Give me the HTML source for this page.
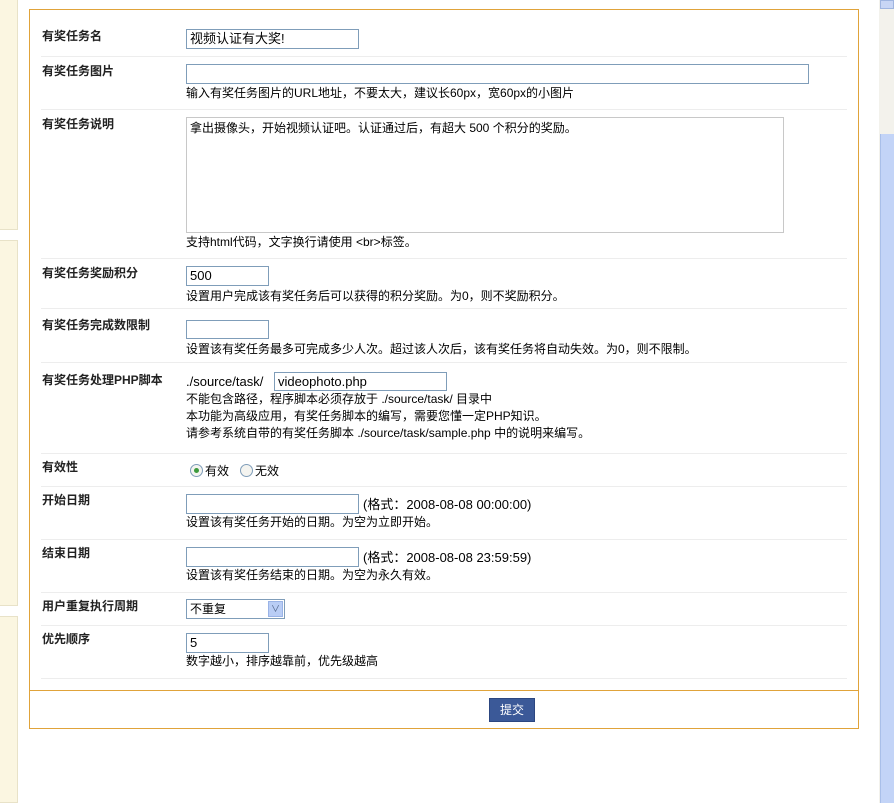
<!DOCTYPE html>
<html><head><meta charset="utf-8"><style>
*{margin:0;padding:0;box-sizing:border-box}
body{width:894px;height:803px;background:#fff;position:relative;overflow:hidden;font-family:"Liberation Sans","Noto Sans CJK SC",sans-serif;font-size:12px;color:#000}
.a{position:absolute;white-space:nowrap;line-height:14px}
.l{font-weight:bold;left:42px;color:#222}
.i{position:absolute;border:1px solid #7f9db9;background:#fff;font-size:13px;line-height:17px;padding-left:3px}
.hr{position:absolute;left:41px;width:806px;height:1px;background:#ededed}
.side{position:absolute;left:0;width:18px;background:#fbf6e1;border-right:1px solid #e8e2c8;border-bottom:1px solid #e8e2c8}
</style></head><body>
<div class="side" style="top:0;height:230px"></div>
<div class="side" style="top:240px;height:366px;border-top:1px solid #e8e2c8"></div>
<div class="side" style="top:616px;height:187px;border-top:1px solid #e8e2c8"></div>
<div style="position:absolute;left:29px;top:9px;width:830px;height:720px;border:1px solid #e0a33a"></div>
<div style="position:absolute;left:30px;top:690px;width:828px;height:1px;background:#e0a33a"></div>
<div style="position:absolute;left:879px;top:0;width:15px;height:803px;background:#f3f2ec"></div>
<div style="position:absolute;left:880px;top:0;width:14px;height:9px;background:#c8d6f5;border:1px solid #9fb5e0"></div>
<div style="position:absolute;left:880px;top:134px;width:14px;height:669px;background:#c3d4f7;border-left:1px solid #a9bfe9"></div>

<div class="hr" style="top:56px"></div><div class="hr" style="top:109px"></div><div class="hr" style="top:258px"></div><div class="hr" style="top:308px"></div><div class="hr" style="top:362px"></div><div class="hr" style="top:453px"></div><div class="hr" style="top:486px"></div><div class="hr" style="top:539px"></div><div class="hr" style="top:592px"></div><div class="hr" style="top:625px"></div><div class="hr" style="top:678px"></div>

<div class="a l" style="top:29px">有奖任务名</div>
<div class="i" style="left:186px;top:29px;width:173px;height:20px">视频认证有大奖!</div>

<div class="a l" style="top:64px">有奖任务图片</div>
<div class="i" style="left:186px;top:64px;width:623px;height:20px"></div>
<div class="a" style="left:186px;top:86px">输入有奖任务图片的URL地址，不要太大，建议长60px，宽60px的小图片</div>

<div class="a l" style="top:117px">有奖任务说明</div>
<div class="i" style="left:186px;top:117px;width:598px;height:116px;border-color:#c8c8c8;font-size:12px;padding:2px 3px">拿出摄像头，开始视频认证吧。认证通过后，有超大 500 个积分的奖励。</div>
<div class="a" style="left:186px;top:235px">支持html代码，文字换行请使用 &lt;br&gt;标签。</div>

<div class="a l" style="top:266px">有奖任务奖励积分</div>
<div class="i" style="left:186px;top:266px;width:83px;height:20px">500</div>
<div class="a" style="left:186px;top:289px">设置用户完成该有奖任务后可以获得的积分奖励。为0，则不奖励积分。</div>

<div class="a l" style="top:318px">有奖任务完成数限制</div>
<div class="i" style="left:186px;top:320px;width:83px;height:19px"></div>
<div class="a" style="left:186px;top:342px">设置该有奖任务最多可完成多少人次。超过该人次后，该有奖任务将自动失效。为0，则不限制。</div>

<div class="a l" style="top:373px">有奖任务处理PHP脚本</div>
<div class="a" style="left:186px;top:375px;font-size:13px">./source/task/</div>
<div class="i" style="left:274px;top:372px;width:173px;height:19px">videophoto.php</div>
<div class="a" style="left:186px;top:392px">不能包含路径，程序脚本必须存放于 ./source/task/ 目录中</div>
<div class="a" style="left:186px;top:409px">本功能为高级应用，有奖任务脚本的编写，需要您懂一定PHP知识。</div>
<div class="a" style="left:186px;top:426px">请参考系统自带的有奖任务脚本 ./source/task/sample.php 中的说明来编写。</div>

<div class="a l" style="top:460px">有效性</div>
<div style="position:absolute;left:190px;top:464px;width:13px;height:13px;border:1px solid #7f9db9;border-radius:50%;background:#f4f4f0"><div style="position:absolute;left:3px;top:3px;width:5px;height:5px;border-radius:50%;background:#3c9a3c"></div></div>
<div class="a" style="left:205px;top:464px">有效</div>
<div style="position:absolute;left:240px;top:464px;width:13px;height:13px;border:1px solid #7f9db9;border-radius:50%;background:#f4f4f0"></div>
<div class="a" style="left:255px;top:464px">无效</div>

<div class="a l" style="top:493px">开始日期</div>
<div class="i" style="left:186px;top:494px;width:173px;height:20px"></div>
<div class="a" style="left:363px;top:498px;font-size:13px">(格式：2008-08-08 00:00:00)</div>
<div class="a" style="left:186px;top:515px">设置该有奖任务开始的日期。为空为立即开始。</div>

<div class="a l" style="top:546px">结束日期</div>
<div class="i" style="left:186px;top:547px;width:173px;height:20px"></div>
<div class="a" style="left:363px;top:551px;font-size:13px">(格式：2008-08-08 23:59:59)</div>
<div class="a" style="left:186px;top:568px">设置该有奖任务结束的日期。为空为永久有效。</div>

<div class="a l" style="top:599px">用户重复执行周期</div>
<div class="i" style="left:186px;top:599px;width:99px;height:20px;font-size:12px;line-height:18px">不重复
<div style="position:absolute;right:1px;top:1px;width:15px;height:16px;background:#b9cdf5;border:1px solid #9ab3e6;color:#4d6185;font-size:9px;line-height:14px;text-align:center">&#8744;</div></div>

<div class="a l" style="top:632px">优先顺序</div>
<div class="i" style="left:186px;top:633px;width:83px;height:20px">5</div>
<div class="a" style="left:186px;top:654px">数字越小，排序越靠前，优先级越高</div>

<div style="position:absolute;left:489px;top:698px;width:46px;height:24px;background:#3b5998;color:#fff;text-align:center;line-height:22px;font-size:12px;border:1px solid #2c4680">提交</div>
</body></html>
